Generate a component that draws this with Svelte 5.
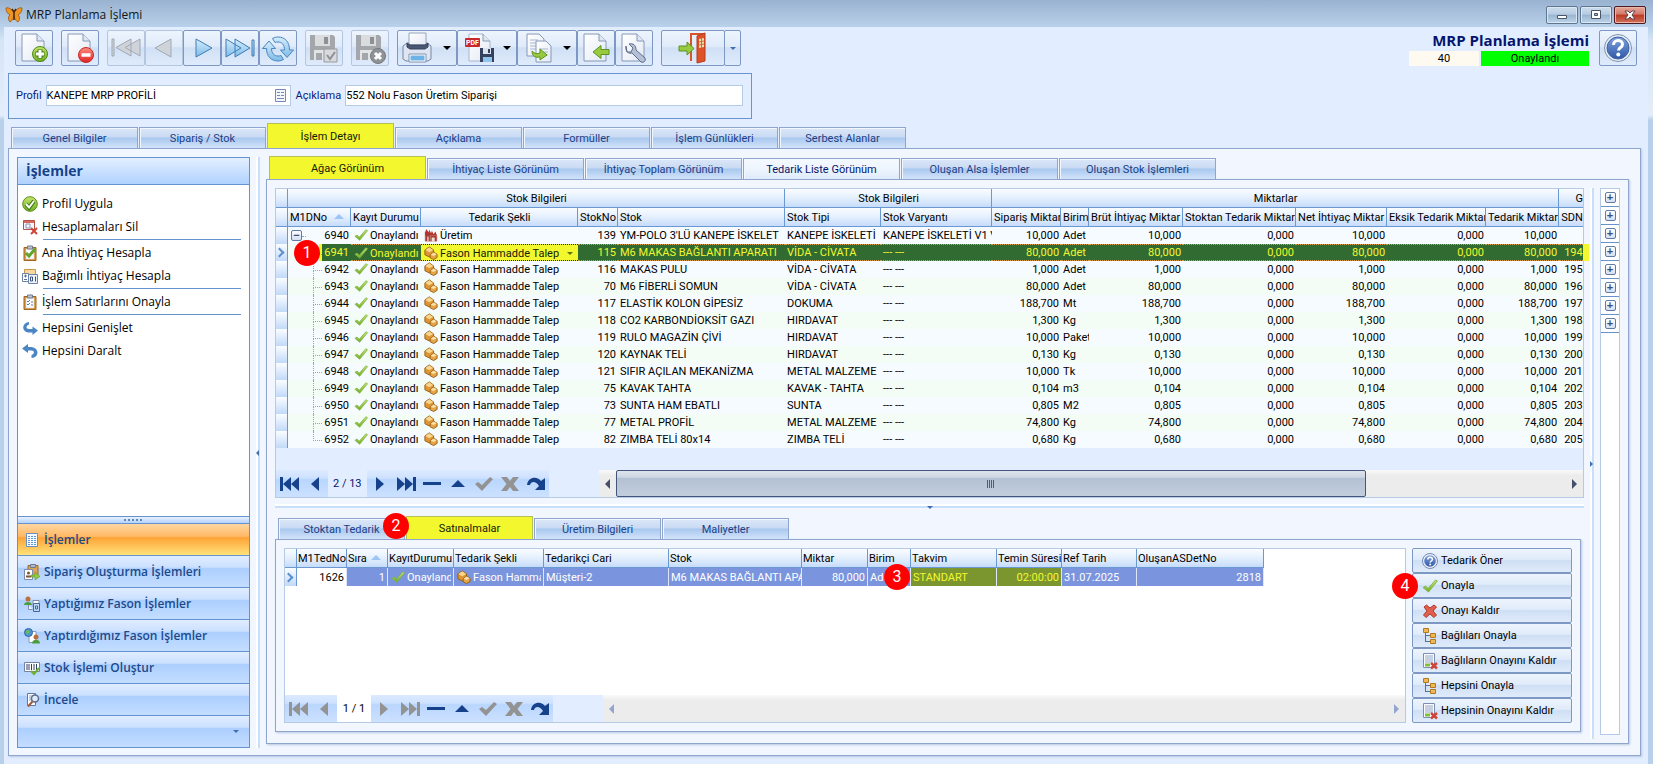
<script lang="ts">
	const mainTabs = ['Genel Bilgiler', 'Sipariş / Stok', 'İşlem Detayı', 'Açıklama', 'Formüller', 'İşlem Günlükleri', 'Serbest Alanlar'];
	const viewTabs = ['Ağaç Görünüm', 'İhtiyaç Liste Görünüm', 'İhtiyaç Toplam Görünüm', 'Tedarik Liste Görünüm', 'Oluşan Alsa İşlemler', 'Oluşan Stok İşlemleri'];
	const detailTabs = ['Stoktan Tedarik', 'Satınalmalar', 'Üretim Bilgileri', 'Maliyetler'];

	let mainTab = $state('İşlem Detayı');
	let viewTab = $state('Ağaç Görünüm');
	let detailTab = $state('Satınalmalar');
	let profile = $state('KANEPE MRP PROFİLİ');
	let description = $state('552 Nolu Fason Üretim Siparişi');

	const toolbar = [
		[{ icon: 'new', label: 'Yeni' }],
		[{ icon: 'delete', label: 'Sil' }],
		[
			{ icon: 'first', label: 'İlk', off: true },
			{ icon: 'prev', label: 'Önceki', off: true },
			{ icon: 'next', label: 'Sonraki' },
			{ icon: 'last', label: 'Son' },
			{ icon: 'refresh', label: 'Yenile' }
		],
		[{ icon: 'save', label: 'Kaydet', off: true }],
		[{ icon: 'cancel', label: 'Vazgeç', off: true }],
		[
			{ icon: 'print', label: 'Yazdır', menu: true },
			{ icon: 'pdf', label: 'PDF', menu: true },
			{ icon: 'copy', label: 'Kopyala', menu: true },
			{ icon: 'import', label: 'Al' },
			{ icon: 'tools', label: 'Araçlar' }
		]
	];

	const actions = [
		[
			{ icon: 'okball', label: 'Profil Uygula' },
			{ icon: 'calcdel', label: 'Hesaplamaları Sil' }
		],
		[
			{ icon: 'clipcheck', label: 'Ana İhtiyaç Hesapla' },
			{ icon: 'calc', label: 'Bağımlı İhtiyaç Hesapla' }
		],
		[{ icon: 'clip', label: 'İşlem Satırlarını Onayla' }],
		[
			{ icon: 'expand', label: 'Hepsini Genişlet' },
			{ icon: 'collapse', label: 'Hepsini Daralt' }
		]
	];

	const navItems = [
		{ icon: 'list', label: 'İşlemler' },
		{ icon: 'order', label: 'Sipariş Oluşturma İşlemleri' },
		{ icon: 'person', label: 'Yaptığımız Fason İşlemler' },
		{ icon: 'globe', label: 'Yaptırdığımız Fason İşlemler' },
		{ icon: 'barcode', label: 'Stok İşlemi Oluştur' },
		{ icon: 'inspect', label: 'İncele' }
	];

	const columns = ['M1DNo', 'Kayıt Durumu', 'Tedarik Şekli', 'StokNo', 'Stok', 'Stok Tipi', 'Stok Varyantı', 'Sipariş Miktar', 'Birim', 'Brüt İhtiyaç Miktar', 'Stoktan Tedarik Miktar', 'Net İhtiyaç Miktar', 'Eksik Tedarik Miktar', 'Tedarik Miktar', 'SDN'];

	const rows = [
		{ id: 6940, no: 139, stock: "YM-POLO 3'LÜ KANEPE İSKELET", type: 'KANEPE İSKELETİ', variant: 'KANEPE İSKELETİ V1 V', qty: '10,000', unit: 'Adet', sdn: '' },
		{ id: 6941, no: 115, stock: 'M6 MAKAS BAĞLANTI APARATI', type: 'VİDA - CİVATA', variant: '--- ---', qty: '80,000', unit: 'Adet', sdn: '194' },
		{ id: 6942, no: 116, stock: 'MAKAS PULU', type: 'VİDA - CİVATA', variant: '--- ---', qty: '1,000', unit: 'Adet', sdn: '195' },
		{ id: 6943, no: 70, stock: 'M6 FİBERLİ SOMUN', type: 'VİDA - CİVATA', variant: '--- ---', qty: '80,000', unit: 'Adet', sdn: '196' },
		{ id: 6944, no: 117, stock: 'ELASTİK KOLON GİPESİZ', type: 'DOKUMA', variant: '--- ---', qty: '188,700', unit: 'Mt', sdn: '197' },
		{ id: 6945, no: 118, stock: 'CO2 KARBONDİOKSİT GAZI', type: 'HIRDAVAT', variant: '--- ---', qty: '1,300', unit: 'Kg', sdn: '198' },
		{ id: 6946, no: 119, stock: 'RULO MAGAZİN ÇİVİ', type: 'HIRDAVAT', variant: '--- ---', qty: '10,000', unit: 'Paket', sdn: '199' },
		{ id: 6947, no: 120, stock: 'KAYNAK TELİ', type: 'HIRDAVAT', variant: '--- ---', qty: '0,130', unit: 'Kg', sdn: '200' },
		{ id: 6948, no: 121, stock: 'SIFIR AÇILAN MEKANİZMA', type: 'METAL MALZEME', variant: '--- ---', qty: '10,000', unit: 'Tk', sdn: '201' },
		{ id: 6949, no: 75, stock: 'KAVAK TAHTA', type: 'KAVAK - TAHTA', variant: '--- ---', qty: '0,104', unit: 'm3', sdn: '202' },
		{ id: 6950, no: 73, stock: 'SUNTA HAM EBATLI', type: 'SUNTA', variant: '--- ---', qty: '0,805', unit: 'M2', sdn: '203' },
		{ id: 6951, no: 77, stock: 'METAL PROFİL', type: 'METAL MALZEME', variant: '--- ---', qty: '74,800', unit: 'Kg', sdn: '204' },
		{ id: 6952, no: 82, stock: 'ZIMBA TELİ 80x14', type: 'ZIMBA TELİ', variant: '--- ---', qty: '0,680', unit: 'Kg', sdn: '205' }
	];
	let selected = $state(6941);

	const detailColumns = ['M1TedNo', 'Sıra', 'KayıtDurumu', 'Tedarik Şekli', 'Tedarikçi Cari', 'Stok', 'Miktar', 'Birim', 'Takvim', 'Temin Süresi', 'Ref Tarih', 'OluşanASDetNo'];

	const commands = [
		{ icon: 'help16', label: 'Tedarik Öner' },
		{ icon: 'check', label: 'Onayla' },
		{ icon: 'cross', label: 'Onayı Kaldır' },
		{ icon: 'tree', label: 'Bağlıları Onayla' },
		{ icon: 'docdel', label: 'Bağlıların Onayını Kaldır' },
		{ icon: 'tree', label: 'Hepsini Onayla' },
		{ icon: 'docdel', label: 'Hepsinin Onayını Kaldır' }
	];

	const navButtons = ['next', 'last', 'minus', 'up', 'ok', 'x', 'redo'];
</script>

<svelte:head>
	<title>MRP Planlama İşlemi</title>
</svelte:head>

{#snippet page(x)}
	<path d="M{x} 4h15l7 7v20h-22z" fill="url(#paper)" stroke="#8698b8" />
	<path d="M{x + 15} 4v7h7" fill="#dfe7f3" stroke="#8698b8" />
{/snippet}

{#snippet floppy()}
	<path d="M5 5h23l2 2v23H5z" fill="#a3a7ac" />
	<path d="M10 5h15v11H10z" fill="#dadcde" />
	<path d="M19 7h4v7h-4z" fill="#8d9196" />
	<path d="M9 20h17v10H9z" fill="#e3e4e6" />
	<path d="M11 23h6v7h-6z" fill="#a3a7ac" />
{/snippet}

{#snippet toolIcon(name)}
	<svg width="38" height="34" viewBox="0 1 38 34" aria-hidden="true">
		{#if name === 'new'}
			{@render page(7)}
			<circle cx="25" cy="24" r="7.5" fill="url(#green)" stroke="#4f8a12" />
			<path d="M25 19.500v9M20.500 24h9" stroke="#3f7a10" stroke-width="5" />
			<path d="M25 20v8M21 24h8" stroke="#fff" stroke-width="3" />
		{:else if name === 'delete'}
			{@render page(7)}
			<circle cx="25" cy="25" r="7.500" fill="url(#red)" stroke="#c32a2a" />
			<path d="M20.500 25h9" stroke="#fff" stroke-width="3.500" />
		{:else if name === 'first'}
			<path d="M5 9h2v17H5zM24 9v17L9 17.500zM33 9v17L18 17.500z" fill="#cfd4da" stroke="#a2a9b2" />
		{:else if name === 'prev'}
			<path d="M26 9v18L10 18z" fill="#cfd4da" stroke="#a2a9b2" />
		{:else if name === 'next'}
			<path d="M13 9v18l16-9z" fill="url(#sky)" stroke="#3f7cb8" />
		{:else if name === 'last'}
			<path d="M5 9v18l15-9zM14 9v18l15-9zM31 10h2v16h-2z" fill="url(#sky)" stroke="#3f7cb8" />
		{:else if name === 'refresh'}
			<path d="M3.500 18.500L10 11l6.500 7.500h-4C12.500 23 15 26 19 26c1 0 2 0 3-.5l2.500 4c-2 1-3.500 1.500-5.500 1.500C12 31 7.500 26 7.500 18.500z" fill="url(#sky)" stroke="#4a86bd" />
			<path d="M34.500 20L28 27.500 21.500 20h4c0-5-2.500-8-6.500-8-1 0-2 0-3 .5l-2.500-4C15.500 7.500 17 7 19 7c7 0 11.500 5 11.500 13z" fill="url(#sky)" stroke="#4a86bd" />
		{:else if name === 'save'}
			{@render floppy()}
			<path d="M19 19h13v13H19z" fill="#d7d9dc" stroke="#96999e" />
			<path d="M22 25l3 4 5-7" fill="none" stroke="#8d9196" stroke-width="2" />
		{:else if name === 'cancel'}
			{@render floppy()}
			<circle cx="27" cy="26" r="7.500" fill="#8f9398" stroke="#75797e" />
			<path d="M24 23l6 6m0-6l-6 6" stroke="#fff" stroke-width="3" />
		{:else if name === 'print'}
			<path d="M5 16l4-3h20l4 3v13l-3 2H8l-3-2z" fill="#dfe6f2" stroke="#7786a8" />
			<path d="M11 3h17v12H11z" fill="url(#paper)" stroke="#97a4bf" />
			<path d="M9 13v4l3 2h15l3-2v-4l-3 2H12z" fill="#4b5874" stroke="#35425f" />
			<path d="M11 24h17v8H11z" fill="#fff" stroke="#8291ad" />
			<path d="M12.500 25.500h14v5h-14z" fill="#6db3e8" />
		{:else if name === 'pdf'}
			<path d="M11 4h14l7 7v20H11z" fill="url(#paper)" stroke="#a9b6cc" />
			<path d="M25 4v7h7" fill="#dfe7f3" stroke="#8698b8" />
			<rect x="7" y="8" width="15" height="9" rx="1" fill="#c8282b" />
			<text x="8" y="15" font-size="7" font-weight="700" fill="#fff">PDF</text>
			<path d="M22 18h14v14H22z" fill="#35425f" />
			<path d="M25 18h8v6h-8z" fill="#dbe3ee" />
			<path d="M30 19h2v4h-2z" fill="#35425f" />
			<path d="M25 27h9v5h-9z" fill="#8fc4ec" />
		{:else if name === 'copy'}
			<path d="M9 4h12l5 5v17H9z" fill="url(#paper)" stroke="#8698b8" />
			<path d="M12 10h8M12 13h9M12 16h9M12 19h9" stroke="#a9b6cc" />
			<path d="M18 11h10l5 5v16H18z" fill="url(#paper)" stroke="#8698b8" />
			<path d="M21 19h9M21 22h9M26 25h4" stroke="#a9b6cc" />
			<path d="M14 21c3 3 5 3 8 2v-4l7 6-7 5v-3c-5 1-8-1-8-6z" fill="#98c93e" stroke="#5b9420" />
		{:else if name === 'import'}
			{@render page(7)}
			<path d="M16 22l8-6.500v4h8v5h-8v4z" fill="#98c93e" stroke="#5b9420" />
		{:else if name === 'tools'}
			{@render page(7)}
			<path d="M11 16c-1 6 3 8 6 7l9 9c3 1 5-1 4-4l-9-8c0-5-3-7-7-6l4 4-2 4-4 0z" fill="#b3c0d6" stroke="#5d6c89" />
		{:else if name === 'exit'}
			<path d="M17 31V4h14" fill="none" stroke="#d9532c" stroke-width="2" />
			<path d="M23 6l8-3v28l-8 2z" fill="#dd5228" stroke="#b63d1b" />
			<path d="M25 9l5-1v9l-5 1z" fill="#f3dcae" />
			<path d="M27.500 8v10M25 12l5-1M25 15l5-1" stroke="#c5732f" />
			<path d="M5 16h8v-4l7 6.500-7 6.500v-4H5z" fill="#98c93e" stroke="#5b9420" />
		{:else if name === 'help'}
			<circle cx="19" cy="18" r="13.500" fill="#e8edf6" stroke="#7f92b5" />
			<circle cx="19" cy="18" r="11" fill="url(#ball)" stroke="#3c62a5" />
			<path d="M14.500 15c0-6 9-6 9-.5 0 3-4 3-4 6" fill="none" stroke="#fff" stroke-width="3" />
			<circle cx="19.300" cy="24.500" r="2" fill="#fff" />
		{/if}
	</svg>
{/snippet}

{#snippet icon(name)}
	<svg width="16" height="16" viewBox="0 0 16 16" aria-hidden="true">
		{#if name === 'check'}
			<path d="M1 9.500L3.500 8 6 10.500 13.500 2 15.500 3 6.500 14z" fill="url(#green)" stroke="#7cae45" stroke-width=".8" />
		{:else if name === 'cross'}
			<path d="M2 4l2.500-2L8 5l4-3 2.500 2-3.500 4 3.500 4-2.500 2.500L8 11l-4 3.500L1.500 12 5 8z" fill="#e0604f" stroke="#b03a2c" />
		{:else if name === 'okball'}
			<circle cx="8" cy="8" r="7.300" fill="url(#green)" stroke="#5a8f1c" />
			<path d="M4 8l3 3.500L12 5" fill="none" stroke="#3f7a10" stroke-width="4" />
			<path d="M4 8l3 3.500L12 5" fill="none" stroke="#fff" stroke-width="2" />
		{:else if name === 'calcdel'}
			<path d="M1.500 1.500h11v9h-11z" fill="#f4f6fb" stroke="#b4534a" />
			<path d="M2 2h10v2H2z" fill="#d7685c" />
			<path d="M4 5h4v4H4z" fill="none" stroke="#8b94b5" />
			<path d="M9 9l6 6m0-6l-6 6" stroke="#d04438" stroke-width="2" />
		{:else if name === 'clipcheck' || name === 'clip'}
			<path d="M2 2.500h12v13H2z" fill="#d8963c" stroke="#a2661c" />
			<path d="M4 4h8v10H4z" fill="#fbfcff" stroke="#c3c9d8" stroke-width=".5" />
			<path d="M5.500 1h5v3h-5z" fill="#bcc4d2" stroke="#6f7a90" />
			{#if name === 'clipcheck'}
				<path d="M4 8l3 3 6-7" fill="none" stroke="#5fa62a" stroke-width="3" />
			{:else}
				<path d="M5 7l1 1 2-2M5 10l1 1 2-2M9 8h2M9 11h2" fill="none" stroke="#5b7f9a" />
			{/if}
		{:else if name === 'calc'}
			<path d="M2.500 1.500h11v5h-11z" fill="#f7d9a0" stroke="#ce9445" />
			<path d="M.5 5.500h6v8h-6z" fill="#fff" stroke="#6d83ac" />
			<path d="M2 8h3M3.500 6.500v3M2 11.500h3" stroke="#5b6f98" />
			<path d="M6.500 6.500h9v9h-9z" fill="#eef3fb" stroke="#6d83ac" />
			<path d="M8.500 9h2v4h-2zM13.500 8.500v5" fill="none" stroke="#3d5382" />
		{:else if name === 'expand'}
			<path d="M10.500 15l5.500-4.500-5.500-4v2.500H7C4 9 3.500 6 7 4.500V2C0 2.500-1 11 6 12.500h4.500z" fill="#4b86c4" />
		{:else if name === 'collapse'}
			<path d="M6 1L0 5.500 6 10V7.500h3.500c3 0 3.500 3 0 4.500V15c8-.5 8-10 0-11H6z" fill="#4b86c4" />
		{:else if name === 'list'}
			<path d="M2.500 1.500h11v13h-11z" fill="#f6faff" stroke="#6b8fbf" />
			<path d="M4 4.500h8M4 6.500h8M4 8.500h8M4 10.500h8M4 12.500h8" stroke="#5f9ad8" stroke-dasharray="2 1" />
		{:else if name === 'order'}
			<path d="M4 1.500h10v11H4z" fill="#dca356" stroke="#9f6b25" />
			<path d="M6.500.5h5v3h-5z" fill="#aeb9cb" stroke="#6f7a90" />
			<path d="M.5 5.500h8v10h-8z" fill="#fff" stroke="#7b8cad" />
			<circle cx="4.500" cy="9" r="1.500" fill="#7d5536" />
			<path d="M2 12.500h5" stroke="#7d5536" stroke-width="2" />
			<path d="M7 11h4V8l5 4.500-5 3.500v-3H7z" fill="#8fc93e" stroke="#5b9420" stroke-width=".5" />
		{:else if name === 'person'}
			<circle cx="4" cy="3" r="2.500" fill="#b9703a" />
			<path d="M0 9c0-4 8-4 8 0z" fill="#4c9c3c" />
			<path d="M4.500 9v4.500h4M9 4.500h6v6H9z" fill="#fff" stroke="#7b8cad" />
			<path d="M9.500 7.500h6v8h-6z" fill="#bfd8f2" stroke="#44699f" />
			<path d="M11.500 10h2v3h-2z" fill="none" stroke="#44699f" />
		{:else if name === 'globe'}
			<path d="M5 3.500h7v11H5z" fill="#fff" stroke="#8a9abb" />
			<circle cx="4.500" cy="4.500" r="4" fill="#4d93d8" stroke="#31689f" />
			<path d="M2 3c2-2 5 0 3 2s-1 2-2 2z" fill="#6fbf4a" />
			<circle cx="12" cy="9" r="2.500" fill="#b9703a" />
			<path d="M8 15.500c0-5 8-5 8 0z" fill="#4c9c3c" />
		{:else if name === 'barcode'}
			<path d="M.5 2.500h15v9H.5z" fill="#fff" stroke="#7483a5" />
			<path d="M3 4v6M5 4v6M7.500 4v6M10 4v6M12.500 4v6" stroke="#33405f" />
			<path d="M7 11l3 3 5-6" fill="none" stroke="#6fb12d" stroke-width="2" />
		{:else if name === 'inspect'}
			<path d="M3.500 1.500h8v12h-8z" fill="#fff" stroke="#5c79ad" />
			<path d="M5 4h5M5 6h3M5 8h3" stroke="#88a2cc" />
			<circle cx="11" cy="6.500" r="3.500" fill="#dcebfa" stroke="#5c6c8c" stroke-width="1.500" />
			<path d="M8.500 9.500L4 14.500" stroke="#a35b34" stroke-width="2" />
		{:else if name === 'boxes'}
			<path d="M1 4.500L6 1l5 3.500v5.500L6 12.500 1 10z" fill="#dd9636" stroke="#94590f" />
			<path d="M1.500 4.500L6 1.500l4.500 3L6 7z" fill="#f9d690" />
			<path d="M7 10l4-3 4 2.500v3.500l-4 2.500L7 13.500z" fill="#e5a547" stroke="#94590f" />
			<path d="M7.500 10L11 7.500l3.500 2L11 11.500z" fill="#fbe0a8" />
		{:else if name === 'factory'}
			<path d="M1 15V5l2-4 2 4 1-3 2 4 1-3 2 4 2-3 2 5v6z" fill="#b8322a" />
			<path d="M2 8h12v7H2z" fill="#f0dcd5" />
			<path d="M2 8h12M3 15V9h3v6M8 15v-5h5v5" fill="none" stroke="#a63a30" stroke-width="1.500" />
		{:else if name === 'tree'}
			<path d="M3.500 4v10M3.500 7.500H8M3.500 13.500H8" fill="none" stroke="#5b6f98" />
			<path d="M1.500.5h5v4h-5zM8.500 5.500h5v4h-5zM8.500 11.500h5v4h-5z" fill="#f2b755" stroke="#b07a22" />
		{:else if name === 'docdel'}
			<path d="M1.500.5h11v14h-11z" fill="#fafcff" stroke="#7d8fb1" />
			<path d="M3 3h8M3 5h8M3 7h8M3 9h8" stroke="#93a4c4" />
			<path d="M3 10.500h5v3H3z" fill="#7fbf3a" />
			<path d="M9 10l6 5.500m0-5.500l-6 5.500" stroke="#cf4436" stroke-width="2.500" />
		{:else if name === 'help16'}
			<circle cx="8" cy="8" r="7.500" fill="#edf2fa" stroke="#7388b3" />
			<circle cx="8" cy="8" r="5.800" fill="url(#ball)" />
			<path d="M5.800 6.500c0-3 4.600-3 4.600 0 0 1.500-2.200 1.500-2.200 3" fill="none" stroke="#fff" stroke-width="1.500" />
			<circle cx="8.200" cy="11.500" r="1" fill="#fff" />
		{:else if name === 'first'}
			<path d="M-1 1h3v14h-3zM10 1v14L2 8zM18 1v14l-8-7z" fill="currentColor" />
		{:else if name === 'prev'}
			<path d="M12 1v14L4 8z" fill="currentColor" />
		{:else if name === 'next'}
			<path d="M4 1v14l8-7z" fill="currentColor" />
		{:else if name === 'last'}
			<path d="M-1 1v14l8-7zM7 1v14l8-7zM15 1h3v14h-3z" fill="currentColor" />
		{:else if name === 'minus'}
			<path d="M-1 6h18v3H-1z" fill="currentColor" />
		{:else if name === 'up'}
			<path d="M1 11l7-7 7 7z" fill="currentColor" />
		{:else if name === 'ok'}
			<path d="M-1 8l3-2 4 3 8-8 3 2L6 15z" fill="currentColor" />
		{:else if name === 'x'}
			<path d="M-1 1h6l3 4 3-4h6l-5.500 7 5.500 7h-6l-3-4-3 4h-6l5.500-7z" fill="currentColor" />
		{:else if name === 'redo'}
			<path d="M-1 9C0 0 10 0 13 5l4-3v12H7l4-4C8 5 3 5 2 9z" fill="currentColor" />
		{/if}
	</svg>
{/snippet}

{#snippet navigator(position, single)}
	<div class="navigator">
		<button class="nav-btn" class:off={single} aria-label="İlk kayıt">{@render icon('first')}</button>
		<button class="nav-btn" class:off={single} aria-label="Önceki kayıt">{@render icon('prev')}</button>
		<span class="position">{position}</span>
		{#each navButtons as name, i}
			<button class="nav-btn" class:off={name === 'ok' || name === 'x' || (single && i < 2)} aria-label={name}>{@render icon(name)}</button>
		{/each}
	</div>
{/snippet}

{#snippet tabs(items, current, pick, kind)}
	<div class="tabs {kind}" role="tablist">
		{#each items as item}
			<button role="tab" class="tab" class:active={item === current} class:hot={item === 'Tedarik Liste Görünüm'} aria-selected={item === current} onclick={() => pick(item)}>
				{item}
				{#if item === 'Satınalmalar'}<span class="badge badge-2">2</span>{/if}
			</button>
		{/each}
	</div>
{/snippet}

<svg class="defs" width="0" height="0" aria-hidden="true">
	<defs>
		<linearGradient id="paper" x1="0" y1="0" x2="1" y2="1"><stop offset="0" stop-color="#fff" /><stop offset="1" stop-color="#e3e9f4" /></linearGradient>
		<linearGradient id="green" x1="0" y1="0" x2="0" y2="1"><stop offset="0" stop-color="#c5e66e" /><stop offset="1" stop-color="#6fae23" /></linearGradient>
		<linearGradient id="red" x1="0" y1="0" x2="0" y2="1"><stop offset="0" stop-color="#ff8d80" /><stop offset="1" stop-color="#e02323" /></linearGradient>
		<linearGradient id="sky" x1="0" y1="0" x2="0" y2="1"><stop offset="0" stop-color="#d5edfb" /><stop offset="1" stop-color="#7dbbe8" /></linearGradient>
		<linearGradient id="ball" x1="0" y1="0" x2="0" y2="1"><stop offset="0" stop-color="#7fa3dc" /><stop offset="1" stop-color="#2e58a8" /></linearGradient>
	</defs>
</svg>

<div class="window">
	<header class="titlebar">
		<svg width="16" height="16" viewBox="0 0 16 16" aria-hidden="true">
			<path d="M8 6C6 2 2 0 0 1c0 4 2 6 4 7-2 1-2 5 0 7 2-1 3-3 4-6 1 3 2 5 4 6 2-2 2-6 0-7 2-1 4-3 4-7-2-1-6 1-8 5z" fill="#ee9420" stroke="#a1560d" stroke-width=".8" />
			<path d="M8 4v9M6 2l2 3 2-3" fill="none" stroke="#4a2508" stroke-width="1.500" />
		</svg>
		<span class="caption">MRP Planlama İşlemi</span>
		<button class="win" aria-label="Simge durumuna küçült"><svg width="12" height="12" viewBox="0 0 12 12"><path d="M1.500 6.500h9v3h-9z" fill="#fff" stroke="#4b5568" /></svg></button>
		<button class="win" aria-label="Ekranı kapla"><svg width="12" height="12" viewBox="0 0 12 12"><path d="M1.500 1.500h9v8h-9z" fill="#fff" stroke="#4b5568" /><path d="M4.500 4.500h3v2h-3z" fill="#9cb5d3" stroke="#4b5568" /></svg></button>
		<button class="win close" aria-label="Kapat"><svg width="12" height="12" viewBox="0 0 12 12"><path d="M1 2h3l2 2 2-2h3L8 6l3 4H8L6 8l-2 2H1l3-4z" fill="#fff" stroke="#5b4250" /></svg></button>
	</header>

	<div class="client">
		<div class="toolbar">
			{#each toolbar as group}
				<div class="group">
					{#each group as item}
						<button class="tool" class:off={item.off} aria-label={item.label}>
							{@render toolIcon(item.icon)}
							{#if item.menu}<span class="caret"></span>{/if}
						</button>
					{/each}
				</div>
			{/each}
			<div class="group">
				<button class="tool exit" aria-label="Çıkış">{@render toolIcon('exit')}</button>
				<button class="tool split" aria-label="Çıkış seçenekleri"><span class="caret blue"></span></button>
			</div>
			<div class="summary">
				<h1>MRP Planlama İşlemi</h1>
				<div class="status"><span class="number">40</span><span class="state">Onaylandı</span></div>
			</div>
			<button class="tool" aria-label="Yardım">{@render toolIcon('help')}</button>
		</div>

		<form class="filters">
			<label for="profile">Profil</label>
			<div class="lookup">
				<input id="profile" type="text" bind:value={profile} />
				<button type="button" aria-label="Profil seç">
					<svg width="11" height="13" viewBox="0 0 11 13"><path d="M.5.500h10v12H.5z" fill="#f3f6fb" stroke="#7888b5" /><path d="M2 3.500h3M6 3.500h3M2 6.500h3M6 6.500h3M2 9.500h7" stroke="#7888b5" /></svg>
				</button>
			</div>
			<label for="description">Açıklama</label>
			<input id="description" type="text" bind:value={description} />
		</form>

		{@render tabs(mainTabs, mainTab, (t) => (mainTab = t), 'main-tabs')}
		<div class="panel main-panel">
			<aside class="sidebar">
				<h2>İşlemler</h2>
				<div class="actions">
					{#each actions as group}
						<div class="action-group">
							{#each group as item}
								<button class="action">{@render icon(item.icon)}{item.label}</button>
							{/each}
						</div>
					{/each}
				</div>
				<div class="grip"></div>
				<nav>
					{#each navItems as item, i}
						<button class="nav-item" class:current={i === 0}>{@render icon(item.icon)}{item.label}</button>
					{/each}
					<button class="nav-item more" aria-label="Diğer"><span class="caret blue"></span></button>
				</nav>
			</aside>
			<div class="vsplit"><span class="arrow-left"></span></div>

			<section class="work">
				{@render tabs(viewTabs, viewTab, (t) => (viewTab = t), 'view-tabs')}
				<div class="panel view-panel">
					<div class="center">
						<div class="grid">
							<div class="table-wrap">
								<table class="tree">
									<colgroup>
										{#each { length: 16 } as _, i}<col class="c{i}" />{/each}
									</colgroup>
									<thead>
										<tr>
											<th></th>
											<th colspan="5">Stok Bilgileri</th>
											<th colspan="2">Stok Bilgileri</th>
											<th colspan="7">Miktarlar</th>
											<th class="cut">G</th>
										</tr>
										<tr class="cols">
											<th></th>
											{#each columns as name, i}
												<th class:mid={i === 2}>{name}{#if i === 0}<span class="sort"></span>{/if}</th>
											{/each}
										</tr>
									</thead>
									<tbody>
										{#each rows as row, i (row.id)}
											<tr class:selected={row.id === selected} onclick={() => (selected = row.id)}>
												<th class="ind">{#if row.id === selected}<span class="chevron"></span>{/if}</th>
												<td class="node" class:root={i === 0} class:end={i === rows.length - 1}>
													{#if i === 0}<button class="box" aria-label="Daralt">−</button>{/if}
													{#if row.id === 6941}<span class="badge badge-1">1</span>{/if}
													<span class="id">{row.id}</span>
												</td>
												<td class="with-icon">{@render icon('check')}Onaylandı</td>
												<td class="with-icon supply">{@render icon(i === 0 ? 'factory' : 'boxes')}{i === 0 ? 'Üretim' : 'Fason Hammadde Talep'}{#if row.id === selected}<span class="caret"></span>{/if}</td>
												<td class="num">{row.no}</td>
												<td>{row.stock}</td>
												<td>{row.type}</td>
												<td>{row.variant}</td>
												<td class="num">{row.qty}</td>
												<td>{row.unit}</td>
												<td class="num">{row.qty}</td>
												<td class="num">0,000</td>
												<td class="num">{row.qty}</td>
												<td class="num">0,000</td>
												<td class="num">{row.qty}</td>
												<td class="sdn">{row.sdn}</td>
											</tr>
										{/each}
									</tbody>
								</table>
								<span class="row-mark"></span>
							</div>
							<div class="grid-foot">
								{@render navigator('2 / 13', false)}
								<div class="scroll">
									<button aria-label="Sola kaydır"><span class="arrow-left big"></span></button>
									<div class="track"><div class="thumb"></div></div>
									<button aria-label="Sağa kaydır"><span class="arrow-right big"></span></button>
								</div>
							</div>
						</div>
						<div class="hsplit"><span class="caret blue"></span></div>

						{@render tabs(detailTabs, detailTab, (t) => (detailTab = t), 'detail-tabs')}
						<div class="panel detail-panel">
							<div class="grid detail-grid">
								<table class="detail">
									<colgroup>
										{#each { length: 13 } as _, i}<col class="d{i}" />{/each}
									</colgroup>
									<thead>
										<tr>
											<th></th>
											{#each detailColumns as name, i}
												<th>{name}{#if i === 1}<span class="sort"></span>{/if}</th>
											{/each}
										</tr>
									</thead>
									<tbody>
										<tr>
											<th class="ind"><span class="chevron"></span></th>
											<td class="num focus">1626</td>
											<td class="num">1</td>
											<td class="with-icon"><div class="clip">{@render icon('check')}Onaylandı</div></td>
											<td class="with-icon"><div class="clip">{@render icon('boxes')}Fason Hamma</div></td>
											<td>Müşteri-2</td>
											<td>M6 MAKAS BAĞLANTI APARATI</td>
											<td class="num">80,000</td>
											<td>Adet</td>
											<td class="mark over">STANDART<span class="badge badge-3">3</span></td>
											<td class="mark num">02:00:00</td>
											<td>31.07.2025</td>
											<td class="num">2818</td>
										</tr>
									</tbody>
								</table>
								<div class="grid-foot">
									{@render navigator('1 / 1', true)}
									<div class="scroll idle">
										<button aria-label="Sola kaydır"><span class="arrow-left big"></span></button>
										<div class="track"></div>
										<button aria-label="Sağa kaydır"><span class="arrow-right big"></span></button>
									</div>
								</div>
							</div>
							<div class="commands">
								{#each commands as item, i}
									<button>{@render icon(item.icon)}{item.label}{#if i === 1}<span class="badge badge-4">4</span>{/if}</button>
								{/each}
							</div>
						</div>
					</div>
					<div class="vsplit right"><span class="arrow-right"></span></div>
					<div class="rail">
						{#each { length: 8 } as _}
							<div class="rail-cell"><button class="box" aria-label="Genişlet">+</button></div>
						{/each}
					</div>
				</div>
			</section>
		</div>
	</div>
</div>

<style>
	:global(body) {
		background: #b9d0ea;
	}

	* {
		box-sizing: border-box;
	}

	.defs {
		position: absolute;
	}

	.window {
		display: flex;
		flex-direction: column;
		min-height: 100vh;
		padding: 0 5px 2px 4px;
		background: linear-gradient(#99b2d0, #b9d1ea 27px, #d5e4f5 40px, #e4eefa 115px, #b9d0ea 120px);
		font: 11px/15px Roboto, "Open Sans", sans-serif;
		color: #000;
	}

	button {
		padding: 0;
		border: none;
		background: none;
		font: inherit;
		color: inherit;
	}

	svg {
		display: block;
		flex: none;
		overflow: visible;
	}

	.titlebar {
		display: flex;
		align-items: center;
		gap: 2px;
		height: 27px;
		padding: 3px 2px 0 2px;
	}

	.caption {
		flex: 1;
		margin-left: 2px;
		font: 12px/16px "Open Sans", sans-serif;
		color: #101820;
	}

	.win {
		display: flex;
		align-items: center;
		justify-content: center;
		width: 32px;
		height: 18px;
		border: 1px solid #5f7691;
		border-radius: 2px;
		background: linear-gradient(#ccdcec, #b8cde2 45%, #98b4d0 50%, #bdd5eb);
		box-shadow: inset 0 0 0 1px #dbe8f4;
	}

	.win.close {
		border-color: #4d1a20;
		background: linear-gradient(#e7a99c, #d27969 45%, #b93a24 50%, #d3705a);
		box-shadow: inset 0 0 0 1px #e8b6aa;
	}

	.client {
		display: flex;
		flex: 1;
		flex-direction: column;
		padding: 3px 7px 8px 4px;
		background: #e2eeff;
	}

	.toolbar {
		display: flex;
		gap: 8px;
		padding: 0 4px 0 7px;
	}

	.group {
		display: flex;
	}

	.tool {
		display: flex;
		align-items: center;
		justify-content: center;
		min-width: 38px;
		height: 36px;
		border: 1px solid #7d98c2;
		border-radius: 2px;
		background: linear-gradient(#edf4fd, #e0ebfa 45%, #d0e0f5 50%, #dfebfb);
	}

	.tool > svg {
		margin: 0 -1px;
	}

	.tool.off {
		border-color: #b4c5e0;
	}

	.tool:has(.caret) {
		width: 60px;
	}

	.tool.exit {
		width: 64px;
	}

	.tool.split {
		width: 17px;
		min-width: 0;
		margin-left: -1px;
	}

	.caret {
		width: 0;
		border: 4px solid transparent;
		border-top-color: #000;
		border-bottom: none;
	}

	.tool .caret:not(.blue) {
		margin: 0 4px 0 8px;
	}

	.caret.blue {
		border-width: 3px;
		border-top-color: #3f6fae;
		border-bottom: none;
	}

	.summary {
		margin: 0 2px 0 auto;
	}

	.summary h1 {
		margin: 0;
		font: 700 15px/21px "Open Sans", sans-serif;
		text-align: right;
		color: #05156e;
	}

	.status {
		display: flex;
		gap: 2px;
		text-align: center;
	}

	.number {
		width: 70px;
		background: #fffaf0;
	}

	.state {
		width: 108px;
		background: #0f0;
	}

	.filters {
		display: flex;
		align-items: center;
		align-self: flex-start;
		width: 744px;
		height: 46px;
		margin-top: 7px;
		padding: 0 8px 2px 7px;
		border: 1px solid #6a94cc;
		color: #0a1a7a;
	}

	.filters label {
		margin-right: 4px;
	}

	.lookup {
		position: relative;
		margin-right: 5px;
	}

	.lookup button {
		position: absolute;
		top: 4px;
		right: 5px;
	}

	input {
		height: 21px;
		padding: 0;
		border: 1px solid #b5cae5;
		background: #fff;
		font: inherit;
		color: #000;
		outline: none;
	}

	.lookup input {
		width: 245px;
	}

	#description {
		flex: 1;
	}

	.tabs {
		display: flex;
		align-items: flex-end;
		gap: 1px;
		height: 25px;
		padding-left: 3px;
	}

	.tab {
		position: relative;
		width: 127px;
		height: 21px;
		border: 1px solid #8fa5cd;
		border-bottom: none;
		background: linear-gradient(#dce7f8, #c9daf3 45%, #a9c8ef 50%, #d2e3fa);
		box-shadow: inset 1px 1px #f2f7fe;
		color: #1c4087;
	}

	.tab.active {
		height: 25px;
		border-color: #b4bf55;
		background: #f3f72e;
		box-shadow: none;
		color: #14200a;
	}

	.tab.hot {
		background: linear-gradient(#f4f9ff, #eef5fe 50%, #dfebfb);
		color: #05156e;
	}

	.main-tabs {
		margin-top: 4px;
	}

	.view-tabs {
		height: 22px;
	}

	.view-tabs .tab {
		width: 157px;
	}

	.view-tabs .tab.active,
	.detail-tabs .tab.active {
		height: 23px;
	}

	.detail-tabs {
		height: 31px;
	}

	.panel {
		display: flex;
		border: 1px solid #8fa5cd;
		background: #f2f7ff;
		box-shadow: 1px 1px 2px #b9c8e2;
	}

	.main-panel {
		flex: 1;
		padding: 8px 11px 11px 8px;
	}

	.sidebar {
		display: flex;
		flex-direction: column;
		flex: none;
		width: 233px;
		margin-bottom: -4px;
		border: 1px solid #6493cf;
		background: #fff;
	}

	.sidebar h2 {
		margin: 0;
		padding-left: 8px;
		border-bottom: 1px solid #6493cf;
		background: linear-gradient(#e3efff, #b0d2ff);
		font: 700 14px/26px "Open Sans", sans-serif;
		color: #15428b;
	}

	.actions {
		flex: 1;
		padding: 7px 8px 0 4px;
	}

	.action-group + .action-group {
		position: relative;
		padding-top: 3px;
	}

	.action-group + .action-group::before {
		content: '';
		position: absolute;
		top: 1px;
		left: 21px;
		right: 0;
		height: 1px;
		background: #6493cf;
	}

	.action {
		display: flex;
		align-items: center;
		gap: 4px;
		height: 23px;
		font: 12px/16px "Open Sans", sans-serif;
	}

	.grip {
		height: 7px;
		border-top: 1px solid #6493cf;
		background:
			repeating-linear-gradient(90deg, #5f88c0 0 2px, transparent 2px 4px) center / 20px 2px no-repeat,
			linear-gradient(#e9f2ff, #b5d3fb);
	}

	.nav-item {
		display: flex;
		align-items: center;
		gap: 4px;
		width: 100%;
		height: 32px;
		padding-left: 6px;
		border-top: 1px solid #6493cf;
		background: linear-gradient(#e0edff, #cbe0ff 36%, #adcfff 40%, #c3ddff);
		font: 600 12px/16px "Open Sans", sans-serif;
		color: #1c4a8b;
	}

	.nav-item.current {
		background: linear-gradient(#ffd6a2, #ffb964 40%, #fea336 44%, #ffe27a);
	}

	.nav-item.more {
		justify-content: flex-end;
		padding-right: 10px;
	}

	.vsplit {
		display: flex;
		align-items: center;
		flex: none;
		width: 4px;
		margin: 0 6px 0 6px;
		margin-bottom: -4px;
		border-left: 2px solid #fff;
		border-right: 2px solid #c8dffb;
	}

	.arrow-left,
	.arrow-right {
		flex: none;
		width: 0;
		border: 3px solid transparent;
	}

	.arrow-left {
		border-left: none;
		border-right-color: #3f6fae;
		margin-left: -2px;
	}

	.arrow-right {
		border-right: none;
		border-left-color: #3f6fae;
		margin-left: -2px;
	}

	.arrow-left.big,
	.arrow-right.big {
		margin: 0;
		border-width: 5px;
	}

	.arrow-left.big {
		border-left: none;
		border-right-color: #45516b;
	}

	.arrow-right.big {
		border-right: none;
		border-left-color: #45516b;
	}

	.idle .arrow-left.big {
		border-right-color: #93a5cf;
	}

	.idle .arrow-right.big {
		border-left-color: #93a5cf;
	}

	.work {
		display: flex;
		flex: 1;
		flex-direction: column;
		min-width: 0;
	}

	.view-panel {
		flex: 1;
		padding: 8px;
	}

	.center {
		display: flex;
		flex: 1;
		flex-direction: column;
		min-width: 0;
	}

	.grid {
		border: 1px solid #b5cae5;
		background: #e2eeff;
	}

	.table-wrap {
		position: relative;
		padding-bottom: 22px;
	}

	table {
		width: 100%;
		table-layout: fixed;
		border-collapse: separate;
		border-spacing: 0;
	}

	th,
	td {
		height: 17px;
		padding: 0 2px;
		overflow: hidden;
		line-height: 15px;
		font-weight: 400;
		text-align: left;
		white-space: nowrap;
	}

	thead th {
		position: relative;
		height: 19px;
		padding: 0 1px 0 2px;
		border-right: 1px solid #6a98d2;
		border-bottom: 1px solid #6a98d2;
		background: linear-gradient(#fafdff, #e4effe 50%, #c6dcfb);
	}

	.tree thead tr:first-child th {
		text-align: center;
	}

	.tree thead th:last-child {
		border-right: none;
	}

	.tree thead tr:first-child .cut {
		padding: 0;
		text-align: right;
	}

	.mid {
		text-align: center;
	}

	.sort {
		position: absolute;
		top: 6px;
		right: 6px;
		border: 5px solid transparent;
		border-top: none;
		border-bottom-color: #9cc4f7;
	}

	.ind {
		padding: 0 0 0 3px;
		border-right: 1px solid #6a98d2;
		background: linear-gradient(#fafdff, #c2d9f9);
	}

	.chevron {
		display: block;
		width: 7px;
		height: 7px;
		margin-left: -3px;
		border: solid #5b8fd0;
		border-width: 2px 2px 0 0;
		rotate: 45deg;
	}

	.tree tbody td {
		background: #f5fbff;
	}

	.tree tbody tr:nth-child(even) td {
		background: #f4fdf5;
	}

	.num {
		text-align: right;
	}

	.tree .sdn {
		padding: 0 0 0 5px;
	}

	.with-icon {
		vertical-align: middle;
	}

	.with-icon svg {
		display: inline-block;
		width: 14px;
		height: 14px;
		margin: 0 2px 0 1px;
		vertical-align: -3px;
	}

	.clip {
		overflow: hidden;
	}

	.node {
		position: relative;
		overflow: visible;
		text-align: right;
	}

	.node::before {
		content: '';
		position: absolute;
		top: 0;
		left: 25px;
		width: 8px;
		height: 9px;
		border: dotted #86a7d6;
		border-width: 0 0 1px 1px;
	}

	.node:not(.root, .end)::after {
		content: '';
		position: absolute;
		top: 9px;
		left: 25px;
		height: 8px;
		border-left: 1px dotted #86a7d6;
	}

	.node.root::before {
		left: 14px;
		width: 4px;
		border-left: none;
	}

	.node .box {
		position: absolute;
		top: 3px;
		left: 3px;
	}

	.box {
		display: flex;
		align-items: center;
		justify-content: center;
		width: 11px;
		height: 11px;
		border: 1px solid #5f7ba6;
		border-radius: 2px;
		background: linear-gradient(#fff, #d3dff0);
		font: 700 11px/9px "Liberation Sans", sans-serif;
		color: #3a5075;
	}

	.tree tbody tr.selected td {
		padding-top: 0;
		padding-bottom: 0;
		border: dotted #e59b3a;
		border-width: 1px 0;
		background: #316b32;
		color: #f3f72e;
		line-height: 13px;
		height: 17px;
	}

	.tree tbody tr.selected .node {
		border-color: transparent;
		background: linear-gradient(90deg, #f4fdf5 31px, #f3f72e 31px 34px, #316b32 34px);
	}

	.tree tbody tr.selected .supply {
		border-color: #14200a;
		background: #f3f72e;
		color: #14200a;
	}

	.supply .caret {
		display: inline-block;
		margin-left: 8px;
		border-width: 3px;
		border-top-color: #5c7417;
		border-bottom: none;
		vertical-align: middle;
	}

	.row-mark {
		position: absolute;
		top: 55px;
		right: -6px;
		width: 6px;
		height: 17px;
		background: #f3f72e;
	}

	.c0 { width: 12px; }
	.c1 { width: 63px; }
	.c2 { width: 70px; }
	.c3 { width: 157px; }
	.c4 { width: 40px; }
	.c5 { width: 167px; }
	.c6 { width: 96px; }
	.c7 { width: 111px; }
	.c8 { width: 69px; }
	.c9 { width: 28px; }
	.c10 { width: 94px; }
	.c11 { width: 113px; }
	.c12 { width: 91px; }
	.c13 { width: 99px; }
	.c14 { width: 73px; }

	.d0 { width: 12px; }
	.d1 { width: 50px; }
	.d2 { width: 41px; }
	.d3 { width: 66px; }
	.d4 { width: 90px; }
	.d5 { width: 125px; }
	.d6 { width: 133px; }
	.d7 { width: 66px; }
	.d8 { width: 43px; }
	.d9 { width: 86px; }
	.d10 { width: 65px; }
	.d11 { width: 75px; }
	.d12 { width: 127px; }

	.grid-foot {
		display: flex;
		justify-content: space-between;
		gap: 50px;
		height: 27px;
		background: #e2eeff;
	}

	.navigator {
		display: flex;
		flex: none;
		background: linear-gradient(#dceaff, #cde1ff 30%, #b9d6fe 36%, #cce1ff);
	}

	.nav-btn {
		display: flex;
		align-items: center;
		justify-content: center;
		width: 26px;
		color: #15428b;
	}

	.nav-btn.off {
		color: #939393;
	}

	.position {
		min-width: 34px;
		padding: 0 5px;
		background: #e2eeff;
		line-height: 27px;
		text-align: center;
		color: #05156e;
	}

	.detail-grid .position {
		background: #fff;
		color: #000;
	}

	.scroll {
		display: flex;
		flex: 1;
		background: linear-gradient(#fafafa, #ececec 20%);
	}

	.scroll button {
		display: flex;
		align-items: center;
		justify-content: center;
		width: 17px;
	}

	.track {
		flex: 1;
	}

	.thumb {
		width: 79%;
		height: 100%;
		border: 1px solid #44567c;
		border-radius: 2px;
		background:
			repeating-linear-gradient(90deg, #4e5d7a 0 1px, transparent 1px 2px) center / 7px 8px no-repeat,
			linear-gradient(#dde4ec, #cdd6e2 25%, #b3c1d4 30%, #c3cedd);
	}

	.hsplit {
		display: flex;
		justify-content: center;
		height: 4px;
		margin-top: 6px;
		border-top: 2px solid #fff;
		border-bottom: 2px solid #c8dffb;
	}

	.detail-panel {
		flex: 1;
		gap: 6px;
		margin-right: 3px;
		margin-bottom: 3px;
		padding: 8px;
	}

	.detail-grid {
		display: flex;
		flex: 1;
		flex-direction: column;
		background: #fff;
	}

	table.detail {
		width: 979px;
	}

	.detail-grid .grid-foot {
		margin-top: auto;
	}

	.detail td {
		height: 18px;
		border-right: 1px solid #dde6fa;
		background: #7a95de;
		color: #fff;
	}

	.detail thead th {
		padding: 0 0 0 1px;
	}

	.detail .focus {
		background: #fff;
		color: #000;
	}

	.detail .mark {
		background: #7b962f;
		color: #f3f72e;
	}

	.over {
		position: relative;
		overflow: visible;
	}

	.commands {
		display: flex;
		flex-direction: column;
		flex: none;
		width: 160px;
	}

	.commands button {
		position: relative;
		display: flex;
		align-items: center;
		gap: 3px;
		height: 25px;
		padding-left: 9px;
		border: 1px solid #7d98c2;
		border-radius: 2px;
		background: linear-gradient(#edf4fd, #e0ebfa 45%, #cfdff4 50%, #dfebfb);
	}

	.badge {
		position: absolute;
		z-index: 1;
		width: 26px;
		height: 26px;
		border-radius: 50%;
		background: #f00;
		font: 16px/26px Roboto, sans-serif;
		text-align: center;
		color: #fff;
	}

	.badge-1 {
		top: -5px;
		left: 6px;
	}

	.badge-2 {
		top: -4px;
		left: -24px;
	}

	.badge-3 {
		top: -4px;
		left: -27px;
	}

	.badge-4 {
		top: -1px;
		left: -21px;
	}

	.vsplit.right {
		margin-top: 0;
	}

	.rail {
		flex: none;
		width: 20px;
		border: 1px solid #b5cae5;
		background: #fff;
	}

	.rail-cell {
		display: flex;
		align-items: center;
		justify-content: center;
		height: 18px;
		border-bottom: 1px solid #6493cf;
	}
</style>
